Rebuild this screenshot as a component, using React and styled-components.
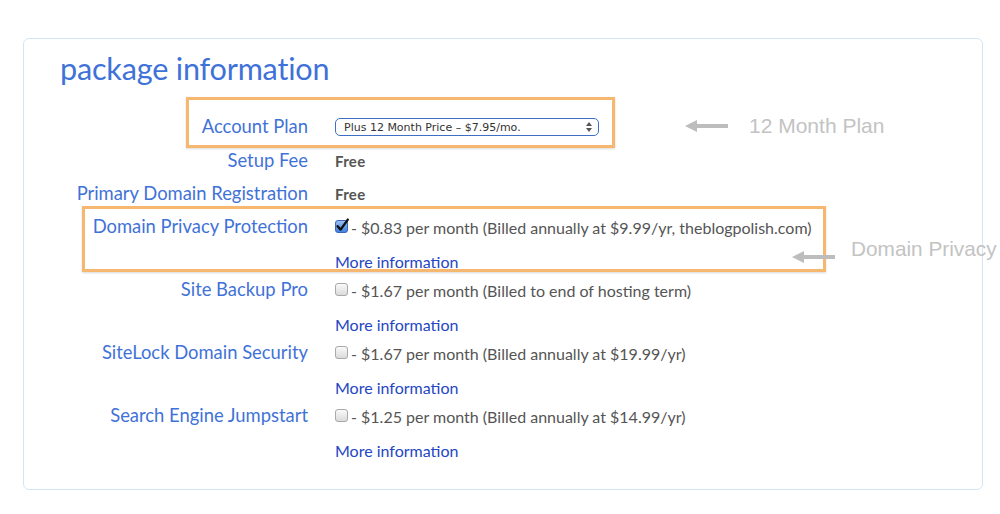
import React from 'react'
import styled, { createGlobalStyle } from 'styled-components'

const GlobalStyle = createGlobalStyle`
  html, body {
    margin: 0;
    padding: 0;
    background: #fff;
  }
  body {
    font-family: Lato, "Open Sans", sans-serif;
  }
`

const rows = [
  { label: 'Account Plan', kind: 'select', tall: true },
  { label: 'Setup Fee', kind: 'free' },
  { label: 'Primary Domain Registration', kind: 'free' },
]

const options = [
  { label: 'Domain Privacy Protection', text: '- $0.83 per month (Billed annually at $9.99/yr, theblogpolish.com)', checked: true },
  { label: 'Site Backup Pro', text: '- $1.67 per month (Billed to end of hosting term)' },
  { label: 'SiteLock Domain Security', text: '- $1.67 per month (Billed annually at $19.99/yr)' },
  { label: 'Search Engine Jumpstart', text: '- $1.25 per month (Billed annually at $14.99/yr)' },
]

const Checkbox = ({ checked }) => (
  <CheckSvg width="14" height="16" viewBox="0 0 14 16">
    <defs>
      <linearGradient id={checked ? 'cbOn' : 'cbOff'} x1="0" y1="0" x2="0" y2="1">
        <stop offset="0" stopColor={checked ? '#9cc2f5' : '#fbfbfb'} />
        <stop offset="1" stopColor={checked ? '#3f7fe0' : '#d9d9d9'} />
      </linearGradient>
    </defs>
    <rect x="0.5" y="2.5" width="12" height="12" rx="2.5"
      fill={`url(#${checked ? 'cbOn' : 'cbOff'})`} stroke={checked ? '#3767b8' : '#a9a9a9'} />
    {checked && (
      <path d="M2.6 8.2 L5.6 11.6 L12.8 1.6" fill="none" stroke="#111" strokeWidth="2.4" strokeLinecap="round" strokeLinejoin="round" />
    )}
  </CheckSvg>
)

const Arrow = () => (
  <svg width="44" height="14" viewBox="0 0 44 14">
    <path d="M0 7 L12 1 L12 5 L43 5 L43 9 L12 9 L12 13 Z" fill="#bdbdbd" />
  </svg>
)

const App = () => {
  return (
    <>
      <GlobalStyle />
      <Page>
        <Card>
          <Title>package information</Title>
          <Grid>
            {rows.map((r) => (
              <React.Fragment key={r.label}>
                <Label $h={r.tall ? 36 : 33}>{r.label}</Label>
                <Value $h={r.tall ? 36 : 33}>
                  {r.kind === 'select' ? (
                    <Select>
                      <span>Plus 12 Month Price – $7.95/mo.</span>
                      <Spinner>
                        <svg width="6" height="10" viewBox="0 0 6 10">
                          <path d="M3 0 L6 4 L0 4 Z M3 10 L6 6 L0 6 Z" fill="#555" />
                        </svg>
                      </Spinner>
                    </Select>
                  ) : (
                    <Free>Free</Free>
                  )}
                </Value>
              </React.Fragment>
            ))}
            {options.map((o) => (
              <React.Fragment key={o.label}>
                <Label $h={32}>{o.label}</Label>
                <Value $h={32}>
                  <Checkbox checked={o.checked} />
                  <OptionText>{o.text}</OptionText>
                </Value>
                <span />
                <More>More information</More>
              </React.Fragment>
            ))}
          </Grid>
        </Card>

        <Highlight style={{ left: 186, top: 97, width: 429, height: 51 }} />
        <Highlight style={{ left: 82, top: 206, width: 744, height: 66 }} />

        <Note $gap={20} style={{ left: 685, top: 114 }}>
          <Arrow />
          <NoteText $size={21}>12 Month Plan</NoteText>
        </Note>
        <Note $gap={15} style={{ left: 792, top: 245 }}>
          <Arrow />
          <NoteText $size={20.8} $shift={-8}>Domain Privacy</NoteText>
        </Note>
      </Page>
    </>
  )
}

export default App

const Page = styled.div`
  position: relative;
  width: 1000px;
  height: 514px;
  padding: 38px 0 0 23px;
  box-sizing: border-box;
  overflow: hidden;
`
const Card = styled.div`
  width: 960px;
  height: 452px;
  box-sizing: border-box;
  border: 1px solid #d6e5f3;
  border-radius: 6px;
  padding: 10px 0 0 0;
`
const Title = styled.h1`
  margin: 0 0 20px 36px;
  font-size: 30.6px;
  line-height: 40px;
  font-weight: 400;
  color: #3f72d8;
  letter-spacing: -0.2px;
`
const Grid = styled.div`
  display: grid;
  grid-template-columns: 284px 1fr;
  column-gap: 27px;
`
const Label = styled.div`
  height: ${(p) => p.$h}px;
  line-height: ${(p) => p.$h - 2}px;
  text-align: right;
  font-size: 18.4px;
  color: #3f72d8;
  white-space: nowrap;
`
const Value = styled.div`
  height: ${(p) => p.$h}px;
  display: flex;
  align-items: center;
  white-space: nowrap;
`
const Select = styled.div`
  width: 264px;
  height: 18px;
  box-sizing: border-box;
  border: 1px solid #3f6fc4;
  border-radius: 5px;
  display: flex;
  align-items: center;
  justify-content: space-between;
  padding: 0 6px 0 8px;
  font-family: "DejaVu Sans", sans-serif;
  font-size: 11px;
  color: #333;
`
const Spinner = styled.span`
  display: flex;
  align-items: center;
`
const Free = styled.span`
  font-size: 15px;
  font-weight: 700;
  color: #555;
  letter-spacing: 0.3px;
  margin-top: -2px;
`
const CheckSvg = styled.svg`
  flex: none;
  margin-right: 2px;
  margin-top: -2px;
  overflow: visible;
`
const OptionText = styled.span`
  font-size: 16px;
  color: #555;
`
const More = styled.div`
  height: 31px;
  box-sizing: border-box;
  padding-top: 6px;
  line-height: 25px;
  font-size: 16px;
  color: #2446c4;
`
const Highlight = styled.div`
  position: absolute;
  box-sizing: border-box;
  border: 3px solid #f6b871;
  box-shadow: 0 1px 2px rgba(0, 0, 0, 0.15);
  pointer-events: none;
`
const Note = styled.div`
  position: absolute;
  display: flex;
  align-items: center;
  gap: ${(p) => p.$gap}px;
  white-space: nowrap;
`
const NoteText = styled.span`
  position: relative;
  top: ${(p) => p.$shift || 0}px;
  font-family: "Liberation Sans", Arial, sans-serif;
  font-size: ${(p) => p.$size}px;
  color: #c3c3c3;
`
